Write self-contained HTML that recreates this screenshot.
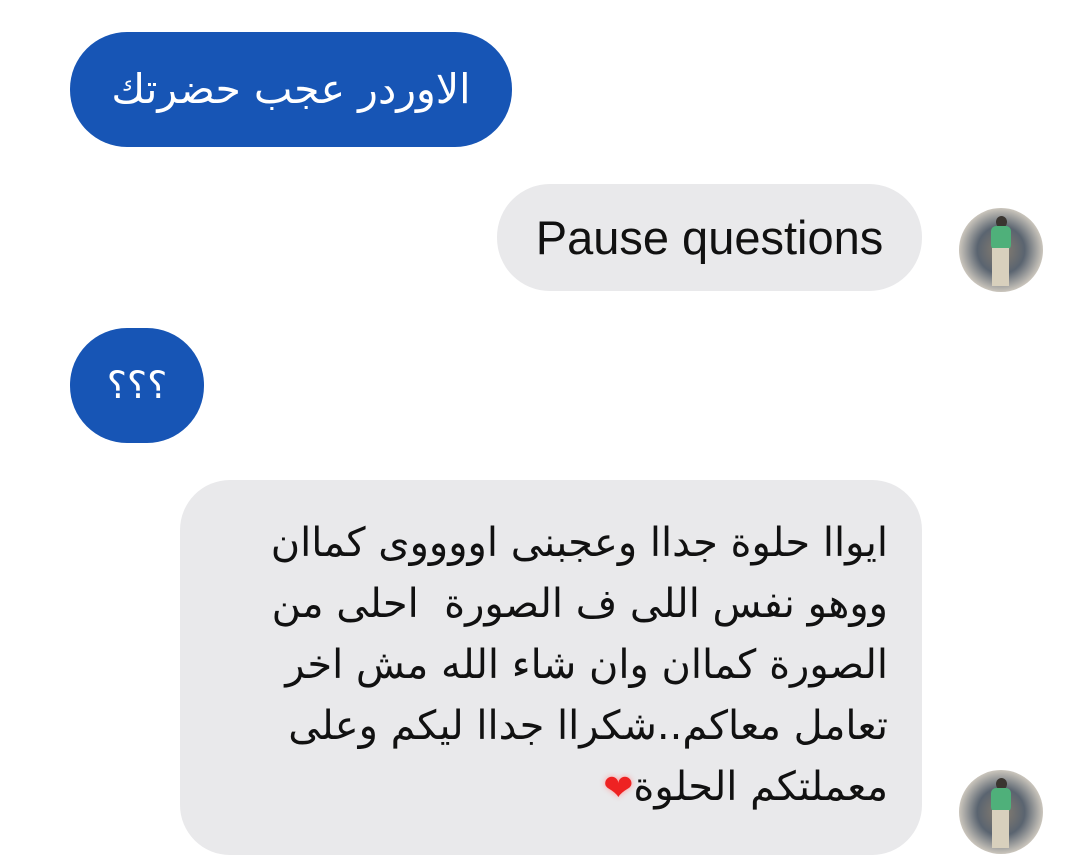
<!DOCTYPE html>
<html><head><meta charset="utf-8"><style>
body{margin:0;width:1080px;height:867px;background:#fff;position:relative;overflow:hidden;font-family:"DejaVu Sans","Liberation Sans",sans-serif}
.b{position:absolute;box-sizing:border-box}
.blue{background:#1755b5;color:#fff}
.gray{background:#e9e9eb;color:#111}
.av{position:absolute;width:84px;height:84px;border-radius:50%;overflow:hidden;background:radial-gradient(circle,#8a7f70 0,#5a6470 40%,#c9c4bb 70%,#77808a 100%)}
.av .t{position:absolute;left:32px;top:18px;width:20px;height:24px;background:#4fb07a;border-radius:5px}
.av .h{position:absolute;left:37px;top:8px;width:11px;height:12px;background:#3a3530;border-radius:50%}
.av .l{position:absolute;left:33px;top:40px;width:17px;height:38px;background:#d8d0bd}
</style></head><body>
<div class="b blue" style="left:70px;top:32px;width:442px;height:115px;border-radius:57px;font-size:41px;line-height:115px;text-align:center;direction:rtl">الاوردر عجب حضرتك</div>
<div class="b gray" style="left:497px;top:184px;width:425px;height:107px;border-radius:53px;font-family:'Liberation Sans',sans-serif;font-size:47px;line-height:107px;text-align:center">Pause questions</div>
<div class="av" style="left:959px;top:208px"><div class="h"></div><div class="t"></div><div class="l"></div></div>
<div class="b blue" style="left:70px;top:328px;width:134px;height:115px;border-radius:57px;font-size:38px;line-height:115px;text-align:center">؟؟؟</div>
<div class="b gray" style="left:180px;top:480px;width:742px;height:375px;border-radius:50px;padding:33px 34px 0 20px;font-size:40px;line-height:61px;text-align:right;direction:rtl;white-space:nowrap">ايواا حلوة جداا وعجبنى اووووى كماان<br>ووهو نفس اللى ف الصورة&nbsp; احلى من<br>الصورة كماان وان شاء الله مش اخر<br>تعامل معاكم..شكراا جداا ليكم وعلى<br>معملتكم الحلوة<span style="font-size:36px;color:#e22;text-shadow:0 0 6px #f99">❤</span></div>
<div class="av" style="left:959px;top:770px"><div class="h"></div><div class="t"></div><div class="l"></div></div>
</body></html>
